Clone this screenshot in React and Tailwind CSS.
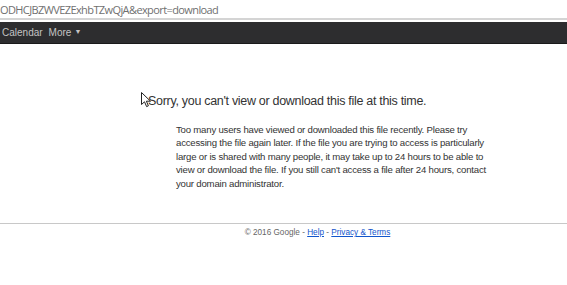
export default function App() {
  return (
    <div className="relative w-[567px] h-[285px] overflow-hidden bg-white" style={{ fontFamily: '"Liberation Sans", Arial, sans-serif' }}>
      <div className="h-[18px] flex items-start pt-[3px] text-[11px] text-[#707070] leading-[13px]" style={{ fontFamily: '"Open Sans", "DejaVu Sans", sans-serif' }}>
        <span className="tracking-[-0.6px]">ODHCJBZWVEZExhbTZwQjA&amp;export=download</span>
      </div>
      <div className="h-[2px] bg-[#d4d4d4]" />
      <div className="h-[2px] bg-white" />
      <div className="h-[22px] bg-[#2d2d2f] border-b border-[#1a1a1a] flex items-center gap-[6px] pl-[2px] text-[10px] text-[#c4c4c4]">
        <span>Calendar</span>
        <span className="flex items-center gap-[3px]">More<span className="text-[7px]">▼</span></span>
      </div>
      <div className="pl-[148px] pt-[49px]">
        <h1 className="text-[12.5px] tracking-[-0.3px] text-[#333] leading-[16px]">Sorry, you can't view or download this file at this time.</h1>
        <p className="mt-[14px] ml-[28px] w-[312px] text-[9.6px] tracking-[-0.2px] leading-[13.4px] text-[#333]">
          Too many users have viewed or downloaded this file recently. Please try accessing the file again later. If the file you are trying to access is particularly large or is shared with many people, it may take up to 24 hours to be able to view or download the file. If you still can't access a file after 24 hours, contact your domain administrator.
        </p>
      </div>
      <div className="mt-[33px] border-t border-[#c8c8c8]" />
      <div className="mt-[3px] text-center text-[8.2px] text-[#666] pl-[68px]">
        © 2016 Google - <a className="text-[#1155cc] underline">Help</a> - <a className="text-[#1155cc] underline">Privacy &amp; Terms</a>
      </div>
      <svg className="absolute left-[141px] top-[92px]" width="11" height="16" viewBox="0 0 11 16">
        <path d="M0.5 0.5 L0.5 12.5 L3.5 9.8 L5.6 14.6 L7.4 13.8 L5.4 9.2 L9.5 9.2 Z" fill="white" stroke="#222" strokeWidth="1" strokeLinejoin="round" />
      </svg>
    </div>
  );
}
